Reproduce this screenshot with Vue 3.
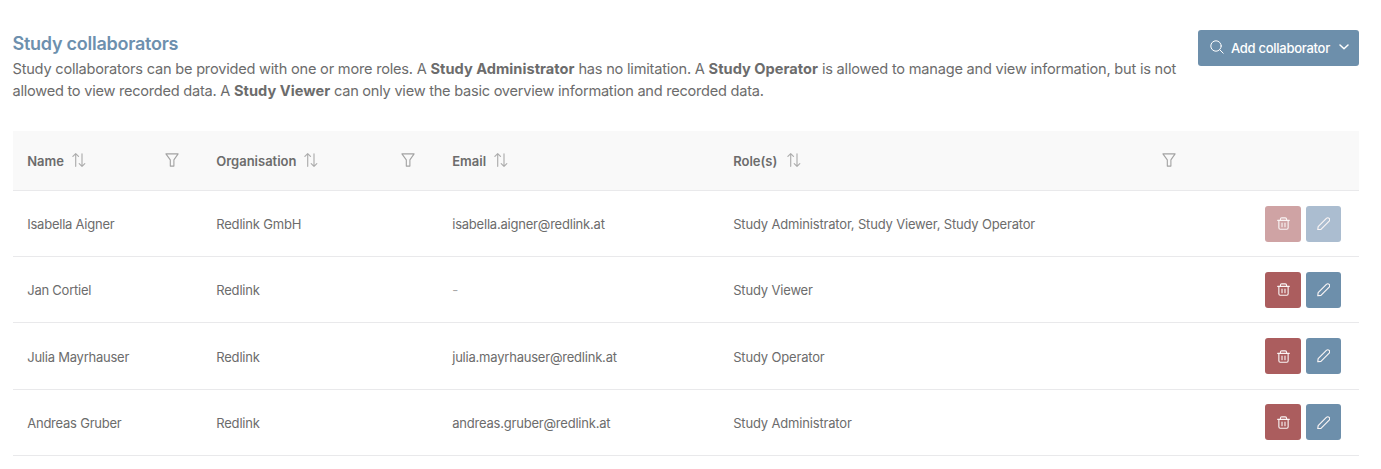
<script setup>
const columns = [
  { key: 'name', label: 'Name', sort: true, filter: true },
  { key: 'organisation', label: 'Organisation', sort: true, filter: true },
  { key: 'email', label: 'Email', sort: true, filter: false },
  { key: 'roles', label: 'Role(s)', sort: true, filter: true },
]

const rows = [
  { name: 'Isabella Aigner', organisation: 'Redlink GmbH', email: 'isabella.aigner@redlink.at', roles: 'Study Administrator, Study Viewer, Study Operator', locked: true },
  { name: 'Jan Cortiel', organisation: 'Redlink', email: '', roles: 'Study Viewer', locked: false },
  { name: 'Julia Mayrhauser', organisation: 'Redlink', email: 'julia.mayrhauser@redlink.at', roles: 'Study Operator', locked: false },
  { name: 'Andreas Gruber', organisation: 'Redlink', email: 'andreas.gruber@redlink.at', roles: 'Study Administrator', locked: false },
]
</script>

<template>
  <main class="page">
    <header class="intro">
      <div class="intro-text">
        <h3 class="title">Study collaborators</h3>
        <p class="lead">
          <span class="line">Study collaborators can be provided with one or more roles. A <b>Study Administrator</b> has no limitation. A <b>Study Operator</b> is allowed to manage and view information, but is not</span>
          <span class="line tight">allowed to view recorded data. A <b>Study Viewer</b> can only view the basic overview information and recorded data.</span>
        </p>
      </div>
      <button class="add" type="button">
        <svg class="search" viewBox="0 0 14 14"><circle cx="6" cy="6" r="5.2" /><path d="M9.8 9.8 13.2 13.2" /></svg>
        <span class="add-label">Add collaborator</span>
        <svg class="chevron" viewBox="0 0 10 6"><path d="M1 1 5 4.8 9 1" /></svg>
      </button>
    </header>

    <section class="table">
      <div class="row head">
        <div v-for="col in columns" :key="col.key" class="cell">
          <span :class="['label', col.key]">{{ col.label }}</span>
          <svg v-if="col.sort" class="sort" viewBox="0 0 14 14">
            <path d="M3.7 13.3V.9M.9 3.4 3.7.7 6.5 3.4M10 .7V13.1M7.2 10.6 10 13.3 12.8 10.6" />
          </svg>
          <svg v-if="col.filter" class="filter" viewBox="0 0 14 14">
            <path d="M.9.9H13.1L8.9 6.9V13.1H5.3V6.9Z" />
          </svg>
        </div>
        <div class="cell"></div>
      </div>
      <div v-for="row in rows" :key="row.name" class="row">
        <div class="cell person">{{ row.name }}</div>
        <div class="cell">{{ row.organisation }}</div>
        <div class="cell mail">
          <span v-if="row.email">{{ row.email }}</span>
          <span v-else class="empty">-</span>
        </div>
        <div class="cell">{{ row.roles }}</div>
        <div :class="['cell', 'actions', { locked: row.locked }]">
          <button class="action remove" type="button" aria-label="Remove" :disabled="row.locked">
            <svg viewBox="0 0 14 14">
              <path d="M.7 3.6H13.3M3.7 3.4V2.3Q3.7.9 5.1.9H8.9Q10.3.9 10.3 2.3V3.4M2 3.8V11.7Q2 13.2 3.5 13.2H10.5Q12 13.2 12 11.7V3.8M5.4 6.4V10.4M8.6 6.4V10.4" />
            </svg>
          </button>
          <button class="action edit" type="button" aria-label="Edit" :disabled="row.locked">
            <svg viewBox="0 0 14 14">
              <path d="M.8 13.2 1.2 9.9 9.7 1.4Q11.2.2 12.6 1.4 13.8 2.8 12.6 4.3L4.1 12.8Z" />
            </svg>
          </button>
        </div>
      </div>
    </section>
  </main>
</template>

<style>
body {
  background: #fff;
}
</style>

<style scoped>
.page {
  box-sizing: border-box;
  height: 469px;
  padding: 29.5px 22px 0 12.5px;
  overflow: hidden;
  font-family: Inter, "Liberation Sans", sans-serif;
  color: #6c6c6c;
}
.intro {
  display: flex;
  justify-content: space-between;
  height: 101.5px;
}
.intro-text {
  padding-top: 2.5px;
}
.title {
  margin: 0;
  font-size: 18px;
  line-height: 24px;
  font-weight: 600;
  letter-spacing: -0.25px;
  color: #6d90ae;
}
.lead {
  margin: 2px 0 0;
  font-size: 14.6px;
  line-height: 22px;
  letter-spacing: -0.215px;
}
.line {
  display: block;
  white-space: nowrap;
}
.tight {
  letter-spacing: -0.25px;
}
.lead b {
  font-weight: 700;
  letter-spacing: 0.03px;
}
.add {
  display: flex;
  align-items: center;
  flex: none;
  width: 161px;
  height: 36px;
  padding: 1px 10.5px 0 12px;
  border: 0;
  border-radius: 3px;
  background: #6d8fab;
  color: #fff;
  font: 500 13px/20px Inter, "Liberation Sans", sans-serif;
  letter-spacing: -0.28px;
}
.add-label {
  margin-left: 7px;
  white-space: nowrap;
}
svg {
  display: block;
  flex: none;
  fill: none;
  stroke: currentColor;
  stroke-linecap: round;
  stroke-linejoin: round;
}
.search {
  width: 14px;
  height: 14px;
  margin-top: -2px;
  stroke-width: 1;
}
.chevron {
  width: 10px;
  height: 6px;
  margin: -2px 0 0 auto;
  stroke-width: 1.5;
}
.row {
  display: grid;
  grid-template-columns: 189px 236px 281px 480px 1fr;
  box-sizing: border-box;
  height: 66.3px;
  border-bottom: 1px solid #e9e9eb;
}
.head {
  height: 59.9px;
  background: #f9f9f9;
}
.cell {
  display: flex;
  align-items: center;
  padding: 1px 10px 0 14.7px;
  font-size: 13px;
  letter-spacing: -0.17px;
  white-space: nowrap;
}
.person {
  letter-spacing: -0.23px;
}
.mail {
  letter-spacing: -0.21px;
}
.head .cell {
  padding-right: 22.4px;
  font-weight: 600;
  letter-spacing: 0;
}
.sort {
  width: 14px;
  height: 14px;
  margin: -1px 0 0 8px;
  color: #acacac;
  stroke-width: 1.15;
}
.roles + .sort {
  margin-left: 9.4px;
}
.filter {
  width: 14px;
  height: 14px;
  margin: -1px 0 0 auto;
  color: #a2a2a2;
  stroke-width: 1.1;
}
.empty {
  color: #a8a8a8;
}
.row .actions {
  justify-content: flex-end;
  gap: 5px;
  padding: 0 17.6px 0 0;
}
.action {
  display: flex;
  align-items: center;
  justify-content: center;
  width: 35.6px;
  height: 36px;
  padding: 0;
  border: 0;
  border-radius: 3px;
  color: #faf5f5;
}
.action svg {
  width: 13px;
  height: 13px;
  stroke-width: 1.2;
}
.edit svg {
  width: 13.5px;
  height: 13.5px;
}
.remove {
  background: #ab5d5e;
}
.edit {
  background: #6d8fab;
}
.locked .remove {
  background: #cfa3a4;
}
.locked .edit {
  background: #abbdd0;
}
</style>
